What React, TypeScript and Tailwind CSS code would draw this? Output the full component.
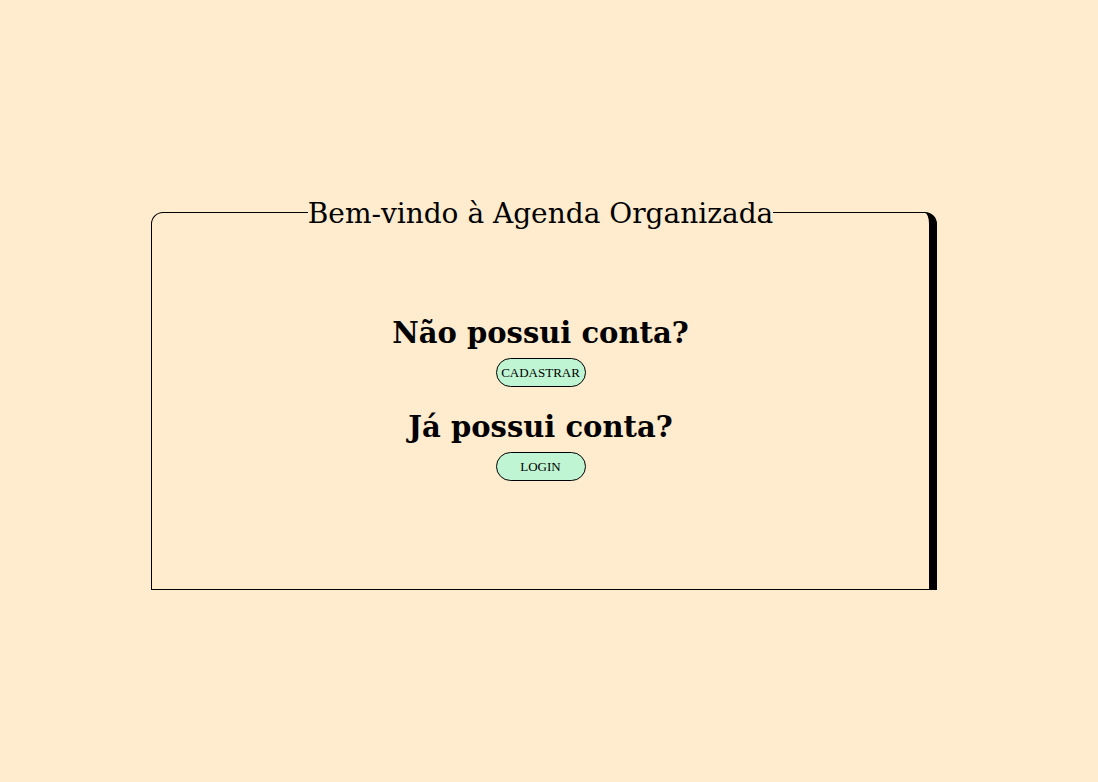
export default function App() {
  return (
    <div className="min-h-[782px] w-full bg-[#ffebcd] pt-[193px]" style={{ fontFamily: '"Liberation Serif", serif' }}>
      <fieldset className="ml-[151px] w-[786px] h-[397px] border border-black border-r-8 rounded-tl-[12px] rounded-tr-[12px] p-0 m-0">
        <legend className="mx-auto px-0 pt-[4px] text-[28px] leading-[34px] text-black" style={{ fontFamily: '"DejaVu Serif", serif' }}>
          Bem-vindo à Agenda Organizada
        </legend>
        <div className="flex flex-col items-center pt-[83px]">
          <h2 className="text-[29px] leading-[38px] font-bold text-black" style={{ fontFamily: '"DejaVu Serif", serif' }}>Não possui conta?</h2>
          <button className="mt-[6px] w-[90px] h-[29px] rounded-full border border-black bg-[#c0f5d3] text-[13px] text-black">CADASTRAR</button>
          <h2 className="mt-[21px] text-[29px] leading-[38px] font-bold text-black" style={{ fontFamily: '"DejaVu Serif", serif' }}>Já possui conta?</h2>
          <button className="mt-[6px] w-[90px] h-[29px] rounded-full border border-black bg-[#c0f5d3] text-[13px] text-black">LOGIN</button>
        </div>
      </fieldset>
    </div>
  );
}
